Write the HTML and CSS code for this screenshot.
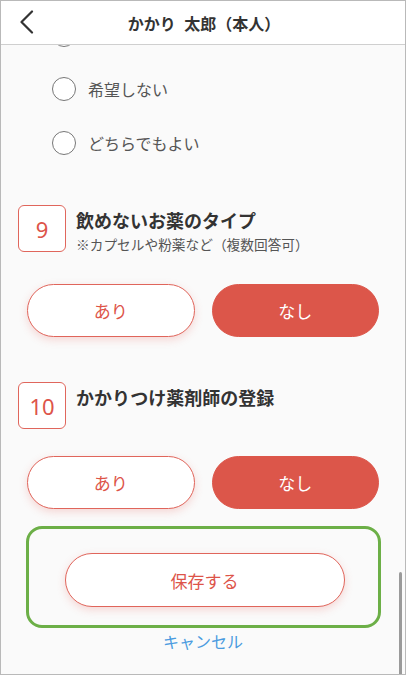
FILE: index.html
```html
<!DOCTYPE html>
<html lang="ja">
<head>
<meta charset="utf-8">
<link rel="stylesheet" href="styles.css">
</head>
<body>
<div class="frame">
  <header class="header">
    <svg class="back" width="16" height="24" viewBox="0 0 16 24"><path d="M13 1.5 L2.5 12 L13 22.5" fill="none" stroke="#333" stroke-width="2.2" stroke-linecap="round" stroke-linejoin="round"/></svg>
    <h1 class="title">かかり 太郎（本人）</h1>
  </header>
  <main class="content">
    <ul class="radios">
      <li class="radio"><span class="circle"></span></li>
      <li class="radio"><span class="circle"></span><span class="label">希望しない</span></li>
      <li class="radio"><span class="circle"></span><span class="label">どちらでもよい</span></li>
    </ul>

    <section class="q q9">
      <div class="qhead">
        <div class="num">9</div>
        <div class="qtext">
          <div class="qtitle">飲めないお薬のタイプ</div>
          <div class="qsub">※カプセルや粉薬など（複数回答可）</div>
        </div>
      </div>
      <div class="choices">
        <button class="btn outline">あり</button>
        <button class="btn filled">なし</button>
      </div>
    </section>

    <section class="q q10">
      <div class="qhead">
        <div class="num">10</div>
        <div class="qtext">
          <div class="qtitle">かかりつけ薬剤師の登録</div>
        </div>
      </div>
      <div class="choices">
        <button class="btn outline">あり</button>
        <button class="btn filled">なし</button>
      </div>
    </section>

    <div class="savebox">
      <button class="save">保存する</button>
    </div>
    <div class="cancel">キャンセル</div>
    <div class="scrollbar"></div>
  </main>
</div>
</body>
</html>
```
FILE: styles.css
```css
* { box-sizing: border-box; }
html, body { margin: 0; padding: 0; }
body {
  font-family: "Noto Sans CJK JP", "Noto Sans", sans-serif;
  background: #fafafa;
}
.frame {
  width: 406px;
  height: 675px;
  border: 1px solid #b9b9b9;
  overflow: hidden;
  display: flex;
  flex-direction: column;
  background: #fafafa;
}
.header {
  flex: 0 0 44px;
  height: 44px;
  background: #fff;
  border-bottom: 1px solid #cfcfcf;
  display: flex;
  align-items: center;
  justify-content: center;
  position: relative;
  z-index: 2;
}
.back {
  position: absolute;
  left: 18px;
  top: 9px;
}
.title {
  margin: 0;
  font-size: 16px;
  font-weight: 700;
  color: #333;
  word-spacing: 5px;
  padding-left: 2px;
}
.content {
  flex: 1;
  position: relative;
  overflow: hidden;
}
.radios {
  list-style: none;
  margin: -37px 0 0 0;
  padding: 0 0 0 51px;
}
.radio {
  height: 54px;
  display: flex;
  align-items: center;
  gap: 12px;
}
.circle {
  width: 24px;
  height: 24px;
  border: 1.5px solid #777;
  border-radius: 50%;
  background: #fff;
}
.label {
  font-size: 16px;
  color: #555;
}
.q { padding: 0 26px 0 17px; }
.q9 { margin-top: 35px; }
.q10 { margin-top: 45px; }
.qhead {
  display: flex;
  align-items: flex-start;
  gap: 10px;
}
.num {
  width: 48px;
  height: 47px;
  border: 1.2px solid #e0665c;
  border-radius: 6px;
  background: #fff;
  color: #dd5449;
  font-size: 22px;
  display: flex;
  align-items: center;
  justify-content: center;
  font-family: "Noto Sans", sans-serif;
}
.qtext { padding-top: 2px; }
.qtitle {
  font-size: 18px;
  font-weight: 700;
  color: #333;
  line-height: 26px;
}
.qsub {
  font-size: 13.7px;
  color: #555;
  line-height: 22px;
}
.q9 .choices { margin-top: 29px; }
.q10 .choices { margin-top: 27px; }
.choices {
  display: flex;
  gap: 17px;
  padding-left: 9px;
}
.btn {
  flex: 1;
  height: 53px;
  border-radius: 27px;
  font-family: inherit;
  font-size: 17px;
  cursor: pointer;
}
.outline {
  background: #fff;
  border: 1.3px solid #e0655b;
  color: #dd5449;
  box-shadow: 0 3px 8px rgba(230, 90, 80, 0.22);
}
.filled {
  background: #dc564a;
  border: 1px solid #dc564a;
  color: #fff;
}
.savebox {
  margin: 17px 24px 0 25px;
  height: 102px;
  border: 3px solid #6caf47;
  border-radius: 16px;
  display: flex;
  justify-content: center;
  padding-top: 24px;
}
.save {
  width: 280px;
  height: 54px;
  border-radius: 27px;
  background: #fff;
  border: 1.3px solid #e0655b;
  color: #dd5449;
  font-family: inherit;
  font-size: 17px;
  box-shadow: 0 3px 8px rgba(230, 90, 80, 0.22);
  margin-left: 2px;
}
.cancel {
  text-align: center;
  font-size: 16px;
  color: #4a9be0;
  line-height: 24px;
  margin-top: 1px;
}
.scrollbar {
  position: absolute;
  right: 3px;
  top: 527px;
  width: 3px;
  height: 120px;
  border-radius: 2px;
  background: #9a9a9a;
}
```
